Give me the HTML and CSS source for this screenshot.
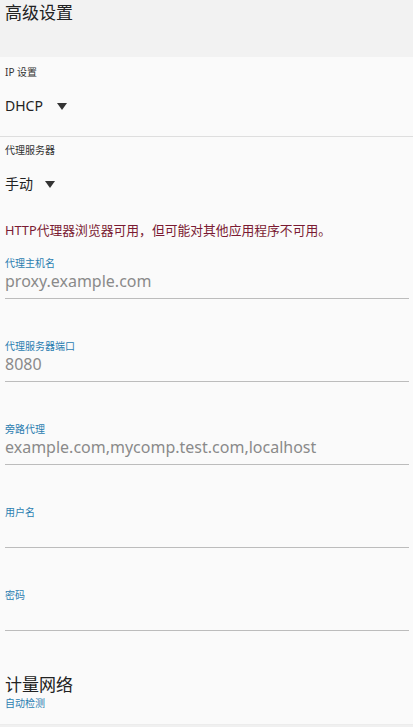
FILE: index.html
```html
<!DOCTYPE html>
<html lang="zh-CN">
<head>
<meta charset="utf-8">
<title>高级设置</title>
<link rel="stylesheet" href="styles.css">
</head>
<body>
<div class="page">
  <header class="appbar">
    <h1 class="appbar-title">高级设置</h1>
  </header>

  <section class="group group-ip">
    <div class="group-label">IP 设置</div>
    <div class="select">
      <span class="select-value">DHCP</span>
      <span class="select-arrow arrow-wide"></span>
    </div>
  </section>

  <section class="group group-proxy">
    <div class="group-label">代理服务器</div>
    <div class="select">
      <span class="select-value">手动</span>
      <span class="select-arrow"></span>
    </div>
    <p class="warning">HTTP代理器浏览器可用，但可能对其他应用程序不可用。</p>
  </section>

  <div class="field field-first">
    <div class="field-label">代理主机名</div>
    <div class="field-value">proxy.example.com</div>
  </div>
  <div class="field">
    <div class="field-label">代理服务器端口</div>
    <div class="field-value">8080</div>
  </div>
  <div class="field">
    <div class="field-label">旁路代理</div>
    <div class="field-value">example.com,mycomp.test.com,localhost</div>
  </div>
  <div class="field">
    <div class="field-label">用户名</div>
    <div class="field-value"></div>
  </div>
  <div class="field">
    <div class="field-label">密码</div>
    <div class="field-value"></div>
  </div>

  <section class="metered">
    <div class="metered-title">计量网络</div>
    <div class="metered-sub">自动检测</div>
  </section>
  <div class="bottom-edge"></div>
</div>
</body>
</html>
```

FILE: styles.css
```css
html, body {
  margin: 0;
  padding: 0;
}
body {
  background: #fafafa;
  font-family: "Noto Sans", "Noto Sans CJK SC", sans-serif;
  color: #222;
}
.page {
  width: 413px;
  height: 727px;
  overflow: hidden;
  display: flex;
  flex-direction: column;
}
.appbar {
  background: #f2f2f2;
  height: 57px;
  box-sizing: border-box;
  padding: 2px 5px 0;
  flex: none;
}
.appbar-title {
  margin: 0;
  font-weight: normal;
  font-size: 17px;
  line-height: 22px;
  color: #222;
}
.group {
  padding: 0 5px;
  flex: none;
}
.group-ip {
  height: 80px;
  box-sizing: border-box;
  border-bottom: 1px solid #dedede;
}
.group-label {
  font-size: 10px;
  line-height: 14px;
  color: #333;
  margin-top: 8px;
}
.group-proxy .group-label {
  margin-top: 6px;
}
.select {
  display: flex;
  align-items: center;
  gap: 12px;
  margin-top: 17px;
  font-size: 14px;
  line-height: 20px;
  color: #222;
}
.select-arrow {
  width: 0;
  height: 0;
  border-left: 5.5px solid transparent;
  border-right: 5.5px solid transparent;
  border-top: 7px solid #333;
  margin-top: 1px;
}
.arrow-wide {
  margin-left: 2px;
}
.warning {
  margin: 27px 0 0;
  font-size: 12.8px;
  line-height: 18px;
  color: #7a1a32;
}
.field {
  margin: 0 4px 0 5px;
  padding-top: 40px;
  padding-bottom: 6px;
  border-bottom: 1px solid #bcbcbc;
  flex: none;
}
.field-first {
  padding-top: 17px;
}
.field-label {
  font-size: 10px;
  line-height: 14px;
  color: #2a7db0;
}
.field-value {
  font-size: 16px;
  line-height: 22px;
  height: 22px;
  color: #8a8a8a;
}
.metered {
  padding: 43px 5px 0;
  flex: none;
}
.metered-title {
  font-size: 17px;
  line-height: 22px;
  color: #222;
}
.metered-sub {
  font-size: 10px;
  line-height: 14px;
  color: #2a7db0;
}
.bottom-edge {
  margin-top: auto;
  height: 2px;
  background: #f0f0f0;
  border-top: 1px solid #ececec;
  flex: none;
}
```
